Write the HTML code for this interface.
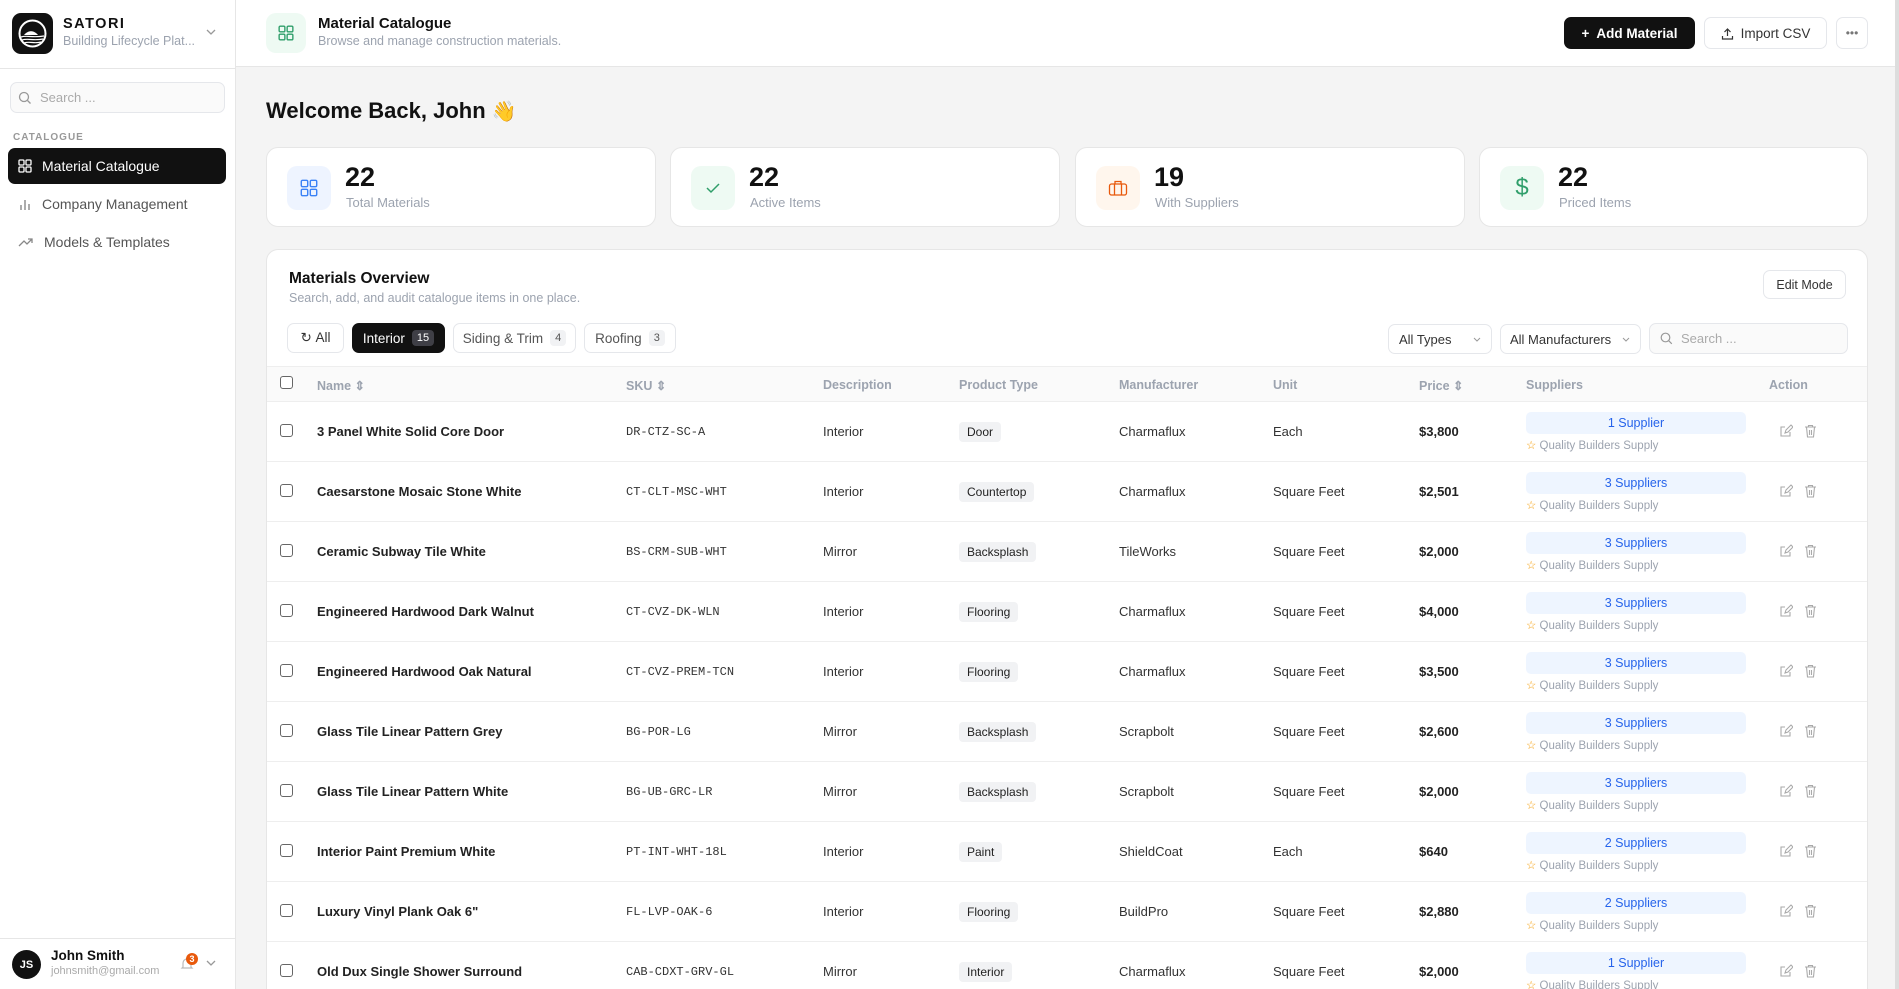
<!DOCTYPE html>
<html style="height:989px;overflow:hidden"><head><meta charset="utf-8">
<style>
*{box-sizing:border-box;margin:0;padding:0}
html,body{width:1899px;height:989px;overflow:hidden}
body{font-family:"Liberation Sans",sans-serif;background:#f4f4f4;color:#111;position:relative}
.abs{position:absolute}
.sb{position:absolute;left:0;top:0;width:236px;height:989px;background:#fff;border-right:1px solid #e6e6e6}
.hdr{position:absolute;left:236px;top:0;width:1663px;height:67px;background:#fff;border-bottom:1px solid #e6e6e6}
.card{position:absolute;background:#fff;border:1px solid #e6e6e6;border-radius:12px}
.ico{position:absolute;border-radius:10px;display:flex;align-items:center;justify-content:center}
.num{position:absolute;font-size:27px;font-weight:bold;color:#111}
.lbl{position:absolute;font-size:13px;color:#9ca3af}
.btn{position:absolute;border:1px solid #e5e7eb;border-radius:7px;background:#fff;font-size:13.5px;display:flex;align-items:center;justify-content:center;color:#333}
.cnt{display:inline-block;background:#f1f2f4;border-radius:4px;font-size:11px;padding:2px 5px;margin-left:7px;color:#555}
.row{position:absolute;left:0;width:1600px;height:60px;border-top:1px solid #eee;font-size:13px;color:#333}
.row>*{position:absolute}
.cb{width:13px;height:13px;border:1.5px solid #666;border-radius:3px;background:#fff}
.nm{left:50px;top:22px;font-weight:bold;color:#222}
.sku{left:359px;top:23px;font-family:"Liberation Mono",monospace;font-size:12px;color:#333}
.ds{left:556px;top:22px}
.tp{left:692px;top:20px;background:#f1f2f4;border-radius:4px;font-size:12px;padding:3px 8px;color:#222}
.mf{left:852px;top:22px}
.un{left:1006px;top:22px}
.pr{left:1152px;top:22px;font-weight:bold;color:#222}
.sp{left:1259px;top:10px;width:220px;height:22px;background:#eef5ff;border-radius:5px;color:#2563eb;font-size:12.5px;text-align:center;line-height:22px}
.sq{left:1259px;top:36px;font-size:11.5px;color:#9ca3af}
.sq b{color:#f59e0b;font-weight:normal}
.a1{left:1512px;top:22px}
.a2{left:1537px;top:22px}
.th{position:absolute;top:11px;font-size:12.5px;color:#9ca3af;font-weight:bold}
.nav{position:absolute;left:8px;width:218px;height:36px;border-radius:7px;font-size:14px;display:flex;align-items:center;padding-left:10px;color:#555}
</style></head><body>

<div class="sb">
  <div class="abs" style="left:12px;top:13px;width:41px;height:41px;background:#111;border-radius:9px">
    <svg width="41" height="41" viewBox="0 0 41 41"><circle cx="20.5" cy="20.5" r="13" fill="none" stroke="#fff" stroke-width="2"/><path d="M12 22c4-5 10-5 14 0" fill="#fff"/><path d="M9 24c6-2 11 1 23-1M10 27c6-2 11 1 21-1M12 30c6-2 10 1 17-1" stroke="#fff" stroke-width="1.2" fill="none"/></svg>
  </div>
  <div class="abs" style="left:63px;top:16px;font-size:14.5px;font-weight:bold;letter-spacing:1.5px">SATORI</div>
  <div class="abs" style="left:63px;top:34px;font-size:12.5px;color:#9ca3af">Building Lifecycle Plat...</div>
  <svg class="abs" style="left:206px;top:29px" width="10" height="7"><path d="M1 1l4 4 4-4" stroke="#999" fill="none" stroke-width="1.3"/></svg>
  <div class="abs" style="left:0;top:68px;width:236px;border-top:1px solid #e6e6e6"></div>
  <div class="abs" style="left:10px;top:82px;width:215px;height:31px;border:1px solid #e5e7eb;border-radius:7px;background:#fafafa"></div>
  <svg class="abs" style="left:18px;top:91px" width="14" height="14"><circle cx="6" cy="6" r="4.5" stroke="#999" fill="none" stroke-width="1.3"/><path d="M9.5 9.5l3 3" stroke="#999" stroke-width="1.3"/></svg>
  <div class="abs" style="left:40px;top:90px;font-size:13px;color:#aaa">Search ...</div>
  <div class="abs" style="left:13px;top:132px;font-size:10px;color:#999;letter-spacing:1px;font-weight:bold">CATALOGUE</div>
  <div class="nav" style="top:148px;background:#111;color:#fff">
    <svg width="14" height="14" viewBox="0 0 14 14" style="margin-right:10px"><g stroke="#fff" fill="none" stroke-width="1.3"><rect x="1" y="1" width="5" height="5" rx="1"/><rect x="8" y="1" width="5" height="5" rx="1"/><rect x="1" y="8" width="5" height="5" rx="1"/><rect x="8" y="8" width="5" height="5" rx="1"/></g></svg>Material Catalogue</div>
  <div class="nav" style="top:186px">
    <svg width="14" height="14" style="margin-right:10px"><path d="M3 13V8M7 13V3M11 13V7" stroke="#888" stroke-width="1.4"/></svg>Company Management</div>
  <div class="nav" style="top:224px">
    <svg width="16" height="14" style="margin-right:10px"><path d="M1 11l5-5 3 3 5-5M10 4h4v4" stroke="#888" stroke-width="1.3" fill="none"/></svg>Models &amp; Templates</div>
  <div class="abs" style="left:0;top:938px;width:236px;border-top:1px solid #e6e6e6"></div>
  <div class="abs" style="left:12px;top:950px;width:29px;height:29px;border-radius:50%;background:#111;color:#fff;font-size:11px;font-weight:bold;display:flex;align-items:center;justify-content:center">JS</div>
  <div class="abs" style="left:51px;top:948px;font-size:13.5px;font-weight:bold">John Smith</div>
  <div class="abs" style="left:51px;top:965px;font-size:11px;color:#aaa">johnsmith@gmail.com</div>
  <svg class="abs" style="left:180px;top:957px" width="14" height="14"><path d="M3 10V6a4 4 0 018 0v4l1 1H2z" stroke="#bbb" fill="none" stroke-width="1.2"/></svg>
  <div class="abs" style="left:186px;top:953px;width:12px;height:12px;border-radius:50%;background:#e8590c;color:#fff;font-size:9px;font-weight:bold;text-align:center;line-height:12px">3</div>
  <svg class="abs" style="left:206px;top:960px" width="10" height="7"><path d="M1 1l4 4 4-4" stroke="#999" fill="none" stroke-width="1.3"/></svg>
</div>

<div class="hdr">
  <div class="ico" style="left:30px;top:13px;width:40px;height:40px;background:#eefaf3">
    <svg width="16" height="16" viewBox="0 0 14 14"><g stroke="#2f9e6a" fill="none" stroke-width="1.2"><rect x="1" y="1" width="5" height="5" rx="1"/><rect x="8" y="1" width="5" height="5" rx="1"/><rect x="1" y="8" width="5" height="5" rx="1"/><rect x="8" y="8" width="5" height="5" rx="1"/></g></svg></div>
  <div class="abs" style="left:82px;top:15px;font-size:15px;font-weight:bold">Material Catalogue</div>
  <div class="abs" style="left:82px;top:34px;font-size:12.5px;color:#9ca3af">Browse and manage construction materials.</div>
</div>
<div class="btn" style="left:1564px;top:17px;width:131px;height:32px;background:#111;color:#fff;border-color:#111;font-weight:bold">+&nbsp; Add Material</div>
<div class="btn" style="left:1704px;top:17px;width:123px;height:32px"><svg width="13" height="13" style="margin-right:7px"><path d="M6.5 9V2M3.5 5l3-3 3 3M1.5 9v3h10V9" stroke="#333" fill="none" stroke-width="1.2"/></svg>Import CSV</div>
<div class="btn" style="left:1836px;top:17px;width:32px;height:32px;color:#777;font-size:12px">•••</div>
<div class="abs" style="left:1895px;top:0;width:4px;height:989px;background:#ddd"></div>

<div class="abs" style="left:266px;top:98px;font-size:22px;font-weight:bold">Welcome Back, John <span style="font-size:20px">👋</span></div>

<div class="card" style="left:266px;top:147px;width:390px;height:80px">
  <div class="ico" style="left:20px;top:18px;width:44px;height:44px;background:#eef4ff"><svg width="18" height="18" viewBox="0 0 14 14"><g stroke="#3b82f6" fill="none" stroke-width="1.1"><rect x="1" y="1" width="5" height="5" rx="1"/><rect x="8" y="1" width="5" height="5" rx="1"/><rect x="1" y="8" width="5" height="5" rx="1"/><rect x="8" y="8" width="5" height="5" rx="1"/></g></svg></div>
  <div class="num" style="left:78px;top:14px">22</div><div class="lbl" style="left:79px;top:47px">Total Materials</div></div>
<div class="card" style="left:670px;top:147px;width:390px;height:80px">
  <div class="ico" style="left:20px;top:18px;width:44px;height:44px;background:#eefaf3"><svg width="18" height="18"><path d="M3 9l4 4 8-8" stroke="#2f9e6a" fill="none" stroke-width="1.5"/></svg></div>
  <div class="num" style="left:78px;top:14px">22</div><div class="lbl" style="left:79px;top:47px">Active Items</div></div>
<div class="card" style="left:1075px;top:147px;width:390px;height:80px">
  <div class="ico" style="left:20px;top:18px;width:44px;height:44px;background:#fff6ed"><svg width="20" height="18"><g stroke="#e8590c" fill="none" stroke-width="1.3"><rect x="1.5" y="5" width="17" height="11" rx="2"/><path d="M7 5V2.5h6V5M6.5 5v11M13.5 5v11"/></g></svg></div>
  <div class="num" style="left:78px;top:14px">19</div><div class="lbl" style="left:79px;top:47px">With Suppliers</div></div>
<div class="card" style="left:1479px;top:147px;width:389px;height:80px">
  <div class="ico" style="left:20px;top:18px;width:44px;height:44px;background:#eefaf3;color:#2f9e6a;font-size:24px">$</div>
  <div class="num" style="left:78px;top:14px">22</div><div class="lbl" style="left:79px;top:47px">Priced Items</div></div>

<div class="card" style="left:266px;top:249px;width:1602px;height:740px;overflow:hidden;border-bottom:none;border-radius:12px 12px 0 0">
  <div class="abs" style="left:22px;top:20px;font-size:15.5px;font-weight:bold">Materials Overview</div>
  <div class="abs" style="left:22px;top:41px;font-size:12.5px;color:#9ca3af">Search, add, and audit catalogue items in one place.</div>
  <div class="btn" style="left:1496px;top:20px;width:83px;height:29px;font-size:12.5px">Edit Mode</div>
  <div class="btn" style="left:20px;top:73px;width:57px;height:30px">&#x21bb;&nbsp;All</div>
  <div class="btn" style="left:85px;top:73px;width:93px;height:30px;background:#111;color:#fff;border-color:#111">Interior<span class="cnt" style="background:#3f3f46;color:#fff">15</span></div>
  <div class="btn" style="left:186px;top:73px;width:123px;height:30px;color:#555">Siding &amp; Trim<span class="cnt">4</span></div>
  <div class="btn" style="left:317px;top:73px;width:92px;height:30px;color:#555">Roofing<span class="cnt">3</span></div>
  <div class="btn" style="left:1121px;top:74px;width:104px;height:30px;justify-content:flex-start;padding-left:10px;font-size:13px">All Types<svg style="position:absolute;right:10px;top:12px" width="8" height="6"><path d="M1 1l3 3 3-3" stroke="#999" fill="none"/></svg></div>
  <div class="btn" style="left:1233px;top:74px;width:141px;height:30px;justify-content:flex-start;padding-left:9px;font-size:13px">All Manufacturers<svg style="position:absolute;right:10px;top:12px" width="8" height="6"><path d="M1 1l3 3 3-3" stroke="#999" fill="none"/></svg></div>
  <div class="btn" style="left:1382px;top:73px;width:199px;height:31px;background:#fafafa;justify-content:flex-start;padding-left:10px;color:#aaa;font-size:13px"><svg width="13" height="13" style="margin-right:8px"><circle cx="5.5" cy="5.5" r="4.3" stroke="#999" fill="none" stroke-width="1.2"/><path d="M8.8 8.8l3 3" stroke="#999" stroke-width="1.2"/></svg>Search ...</div>

  <div class="abs" style="left:0;top:116px;width:1602px;height:35px;background:#fafafa;border-top:1px solid #eee">
    <div class="cb abs" style="left:13px;top:9px"></div>
    <div class="th" style="left:50px">Name ⇕</div><div class="th" style="left:359px">SKU ⇕</div>
    <div class="th" style="left:556px">Description</div><div class="th" style="left:692px">Product Type</div>
    <div class="th" style="left:852px">Manufacturer</div><div class="th" style="left:1006px">Unit</div>
    <div class="th" style="left:1152px">Price ⇕</div><div class="th" style="left:1259px">Suppliers</div>
    <div class="th" style="left:1502px">Action</div>
  </div>
  <div id="rows"></div>
</div>

<script>
var d=[
["3 Panel White Solid Core Door","DR-CTZ-SC-A","Interior","Door","Charmaflux","Each","$3,800","1 Supplier"],
["Caesarstone Mosaic Stone White","CT-CLT-MSC-WHT","Interior","Countertop","Charmaflux","Square Feet","$2,501","3 Suppliers"],
["Ceramic Subway Tile White","BS-CRM-SUB-WHT","Mirror","Backsplash","TileWorks","Square Feet","$2,000","3 Suppliers"],
["Engineered Hardwood Dark Walnut","CT-CVZ-DK-WLN","Interior","Flooring","Charmaflux","Square Feet","$4,000","3 Suppliers"],
["Engineered Hardwood Oak Natural","CT-CVZ-PREM-TCN","Interior","Flooring","Charmaflux","Square Feet","$3,500","3 Suppliers"],
["Glass Tile Linear Pattern Grey","BG-POR-LG","Mirror","Backsplash","Scrapbolt","Square Feet","$2,600","3 Suppliers"],
["Glass Tile Linear Pattern White","BG-UB-GRC-LR","Mirror","Backsplash","Scrapbolt","Square Feet","$2,000","3 Suppliers"],
["Interior Paint Premium White","PT-INT-WHT-18L","Interior","Paint","ShieldCoat","Each","$640","2 Suppliers"],
["Luxury Vinyl Plank Oak 6\"","FL-LVP-OAK-6","Interior","Flooring","BuildPro","Square Feet","$2,880","2 Suppliers"],
["Old Dux Single Shower Surround","CAB-CDXT-GRV-GL","Mirror","Interior","Charmaflux","Square Feet","$2,000","1 Supplier"]];
var h="";
var ed='<svg width="14" height="14"><path d="M11 8v4H2V3h4M6 9l1-3 5-5 2 2-5 5z" stroke="#aaa" fill="none" stroke-width="1.1"/></svg>';
var tr='<svg width="13" height="14"><path d="M1 3h11M4.5 3V1.5h4V3M2.5 3l1 10h6l1-10M5.5 6v5M7.5 6v5" stroke="#aaa" fill="none" stroke-width="1.1"/></svg>';
d.forEach(function(r,i){
h+='<div class="row" style="top:'+(151+i*60)+'px"><div class="cb" style="left:13px;top:22px"></div><div class="nm">'+r[0].replace('"','&quot;')+'</div><div class="sku">'+r[1]+'</div><div class="ds">'+r[2]+'</div><div class="tp">'+r[3]+'</div><div class="mf">'+r[4]+'</div><div class="un">'+r[5]+'</div><div class="pr">'+r[6]+'</div><div class="sp">'+r[7]+'</div><div class="sq"><b>☆</b> Quality Builders Supply</div><div class="a1">'+ed+'</div><div class="a2">'+tr+'</div></div>';
});
document.getElementById("rows").innerHTML=h;
</script>
</body></html>
